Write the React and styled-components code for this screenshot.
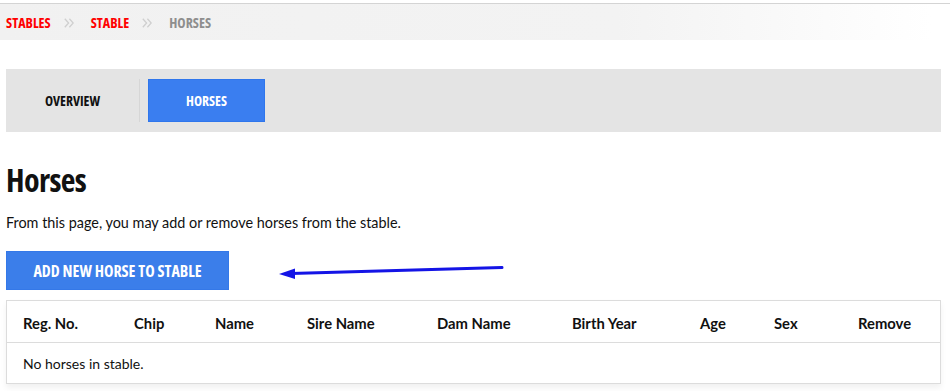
import React from "react";
import styled, { createGlobalStyle } from "styled-components";

const Global = createGlobalStyle`
  html, body { margin: 0; padding: 0; background: #fff; }
  body { font-family: Lato, "Liberation Sans", sans-serif; color: #111; }
  * { box-sizing: border-box; }
`;

const condensed = `
  font-family: "Open Sans", "Roboto Condensed", "DejaVu Sans", sans-serif;
  font-stretch: 75%;
  font-weight: 700;
`;

const Page = styled.div`
  width: 950px;
  height: 391px;
  overflow: hidden;
  padding-top: 3px;
`;

const Breadcrumb = styled.nav`
  height: 37px;
  border-top: 1px solid #d4d4d4;
  background: linear-gradient(to right, #f1f1f1 0%, #f3f3f3 65%, #ffffff 98%);
  display: flex;
  align-items: center;
  padding-left: 6px;
  ${condensed}
  font-size: 14px;
`;

const Crumb = styled.span`
  color: ${(p) => (p.$current ? "#8e8e8e" : "#ff0000")};
`;

const Sep = styled.svg`
  display: block;
  margin: 1px 17px 0 13px;
  flex: none;
`;

const Separator = () => (
  <Sep width="10" height="10" viewBox="0 0 10 10" aria-hidden="true">
    <polyline points="0.8,0.8 4.6,5 0.8,9.2" fill="none" stroke="#cfcfcf" strokeWidth="1.3" />
    <polyline points="5.4,0.8 9.2,5 5.4,9.2" fill="none" stroke="#cfcfcf" strokeWidth="1.3" />
  </Sep>
);

const Content = styled.div`
  padding: 0 9px 0 6px;
`;

const TabBar = styled.div`
  margin-top: 29px;
  height: 63px;
  background: #e4e4e4;
  display: flex;
  align-items: center;
`;

const Tab = styled.div`
  height: 43px;
  width: ${(p) => p.$w}px;
  display: flex;
  align-items: center;
  justify-content: center;
  ${condensed}
  font-size: 13.7px;
  color: ${(p) => (p.$active ? "#fff" : "#111")};
  background: ${(p) => (p.$active ? "#3a7ef0" : "transparent")};
  border: ${(p) => (p.$active ? "1px solid #2f76ec" : "none")};
`;

const Divider = styled.div`
  width: 1px;
  height: 43px;
  background: #d6d6d6;
  margin-right: 8px;
`;

const Title = styled.h1`
  margin: 28px 0 0;
  ${condensed}
  font-size: 32px;
  line-height: 40px;
  letter-spacing: -0.6px;
  color: #111;
`;

const Intro = styled.p`
  margin: 13px 0 0;
  font-family: Lato, "Liberation Sans", sans-serif;
  font-size: 14.4px;
  line-height: 20px;
  color: #111;
`;

const ActionRow = styled.div`
  margin-top: 18px;
  display: flex;
  align-items: center;
`;

const AddButton = styled.button`
  width: 223px;
  height: 39px;
  background: #3b7eea;
  border: 1px solid #3478e8;
  color: #fff;
  ${condensed}
  font-size: 16px;
  padding: 0;
  cursor: pointer;
`;

const Arrow = styled.svg`
  margin-left: 48px;
  display: block;
`;

const Table = styled.div`
  margin-top: 10px;
  width: 935px;
  border: 1px solid #dcdcdc;
  box-shadow: 0 4px 6px rgba(0, 0, 0, 0.06);
  background: #fff;
`;

const HeadRow = styled.div`
  display: grid;
  grid-template-columns: 111px 81px 92px 130px 135px 128px 74px 84px 1fr;
  height: 42px;
  align-items: center;
  border-bottom: 1px solid #dcdcdc;
`;

const Th = styled.div`
  padding-left: 16px;
  padding-top: 2px;
  font-family: Lato, "Liberation Sans", sans-serif;
  font-weight: 700;
  font-size: 14.8px;
  color: #111;
`;

const EmptyRow = styled.div`
  height: 40px;
  display: flex;
  align-items: center;
  padding-left: 16px;
  font-family: Lato, "Liberation Sans", sans-serif;
  font-size: 14px;
  color: #111;
`;

const columns = ["Reg. No.", "Chip", "Name", "Sire Name", "Dam Name", "Birth Year", "Age", "Sex", "Remove"];

export default function App() {
  return (
    <>
      <Global />
      <Page>
        <Breadcrumb>
          <Crumb>STABLES</Crumb>
          <Separator />
          <Crumb>STABLE</Crumb>
          <Separator />
          <Crumb $current>HORSES</Crumb>
        </Breadcrumb>
        <Content>
          <TabBar>
            <Tab $w={133}>OVERVIEW</Tab>
            <Divider />
            <Tab $w={117} $active>HORSES</Tab>
          </TabBar>
          <Title>Horses</Title>
          <Intro>From this page, you may add or remove horses from the stable.</Intro>
          <ActionRow>
            <AddButton>ADD NEW HORSE TO STABLE</AddButton>
            <Arrow width="228" height="20" viewBox="0 0 228 20">
              <line x1="14" y1="12.5" x2="225" y2="6.5" stroke="#1414e6" strokeWidth="3" strokeLinecap="round" />
              <polygon points="2,13 18,7.5 18,18" fill="#1414e6" />
            </Arrow>
          </ActionRow>
          <Table>
            <HeadRow>
              {columns.map((c) => (
                <Th key={c}>{c}</Th>
              ))}
            </HeadRow>
            <EmptyRow>No horses in stable.</EmptyRow>
          </Table>
        </Content>
      </Page>
    </>
  );
}
